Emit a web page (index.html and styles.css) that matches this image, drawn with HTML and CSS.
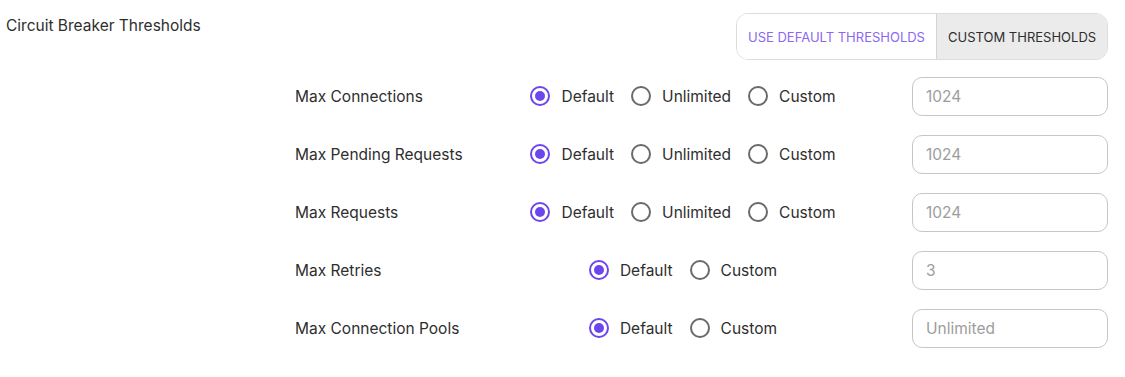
FILE: index.html
```html
<!DOCTYPE html>
<html lang="en">
<head>
    <meta charset="UTF-8">
    <title>Circuit Breaker Thresholds</title>
    <link rel="stylesheet" href="styles.css">
</head>
<body>
    <div class="panel">
        <div class="panel-header">
            <h2 class="panel-title">Circuit Breaker Thresholds</h2>
            <div class="toggle-group">
                <button class="toggle-btn toggle-default">USE DEFAULT THRESHOLDS</button>
                <button class="toggle-btn toggle-custom is-active">CUSTOM THRESHOLDS</button>
            </div>
        </div>

        <div class="threshold-list">
            <div class="threshold-row">
                <span class="threshold-label">Max Connections</span>
                <div class="radio-group">
                    <label class="radio"><span class="radio-dot is-checked"></span>Default</label>
                    <label class="radio"><span class="radio-dot"></span>Unlimited</label>
                    <label class="radio"><span class="radio-dot"></span>Custom</label>
                </div>
                <input class="threshold-input" type="text" placeholder="1024">
            </div>

            <div class="threshold-row">
                <span class="threshold-label">Max Pending Requests</span>
                <div class="radio-group">
                    <label class="radio"><span class="radio-dot is-checked"></span>Default</label>
                    <label class="radio"><span class="radio-dot"></span>Unlimited</label>
                    <label class="radio"><span class="radio-dot"></span>Custom</label>
                </div>
                <input class="threshold-input" type="text" placeholder="1024">
            </div>

            <div class="threshold-row">
                <span class="threshold-label">Max Requests</span>
                <div class="radio-group">
                    <label class="radio"><span class="radio-dot is-checked"></span>Default</label>
                    <label class="radio"><span class="radio-dot"></span>Unlimited</label>
                    <label class="radio"><span class="radio-dot"></span>Custom</label>
                </div>
                <input class="threshold-input" type="text" placeholder="1024">
            </div>

            <div class="threshold-row">
                <span class="threshold-label">Max Retries</span>
                <div class="radio-group">
                    <label class="radio"><span class="radio-dot is-checked"></span>Default</label>
                    <label class="radio"><span class="radio-dot"></span>Custom</label>
                </div>
                <input class="threshold-input" type="text" placeholder="3">
            </div>

            <div class="threshold-row">
                <span class="threshold-label">Max Connection Pools</span>
                <div class="radio-group">
                    <label class="radio"><span class="radio-dot is-checked"></span>Default</label>
                    <label class="radio"><span class="radio-dot"></span>Custom</label>
                </div>
                <input class="threshold-input" type="text" placeholder="Unlimited">
            </div>
        </div>
    </div>
</body>
</html>
```

FILE: styles.css
```css
/* --- Base --- */
* {
    margin: 0;
    padding: 0;
    box-sizing: border-box;
}

body {
    font-family: 'Inter', 'Liberation Sans', sans-serif;
    color: #2e2e2e;
    background: #ffffff;
}

.panel {
    padding: 0 17px 0 6px;
}

/* --- Header --- */
.panel-header {
    display: flex;
    justify-content: space-between;
    align-items: flex-start;
    padding-top: 13px;
}

.panel-title {
    font-size: 15.5px;
    font-weight: 400;
    line-height: 22px;
    padding-top: 2px;
    color: #2e2e2e;
}

.toggle-group {
    display: flex;
    height: 47px;
    border: 1px solid #dcdcdc;
    border-radius: 12px;
    overflow: hidden;
}

.toggle-btn {
    font-family: inherit;
    font-size: 13px;
    border: none;
    background: #ffffff;
    white-space: nowrap;
    cursor: pointer;
}

.toggle-default {
    width: 199px;
    padding: 0 11px;
    color: #8c68f2;
    text-align: left;
}

.toggle-custom {
    width: 171px;
    padding: 0 11px;
    color: #2e2e2e;
    text-align: left;
    border-left: 1px solid #d4d4d4;
}

.toggle-btn.is-active {
    background: #ebebeb;
}

/* --- Rows --- */
.threshold-list {
    margin-top: 7px;
    padding-left: 289px;
}

.threshold-row {
    display: grid;
    grid-template-columns: 188px 400px 1fr;
    align-items: center;
    height: 58px;
}

.threshold-label {
    font-size: 15.5px;
}

.radio-group {
    display: flex;
    justify-content: center;
    gap: 17px;
}

.radio {
    display: flex;
    align-items: center;
    gap: 11px;
    font-size: 15.5px;
    cursor: pointer;
}

.radio-dot {
    width: 20px;
    height: 20px;
    border: 2px solid #6a6a6a;
    border-radius: 50%;
    display: flex;
    justify-content: center;
    align-items: center;
}

.radio-dot.is-checked {
    border-color: #6c46ec;
}

.radio-dot.is-checked::after {
    content: "";
    width: 10px;
    height: 10px;
    border-radius: 50%;
    background: #6c46ec;
}

.threshold-input {
    justify-self: end;
    width: 196px;
    height: 39px;
    border: 1px solid #c6c6c6;
    border-radius: 10px;
    padding: 0 13px;
    font-family: inherit;
    font-size: 15.5px;
    color: #2e2e2e;
}

.threshold-input::placeholder {
    color: #9d9d9d;
}
```
